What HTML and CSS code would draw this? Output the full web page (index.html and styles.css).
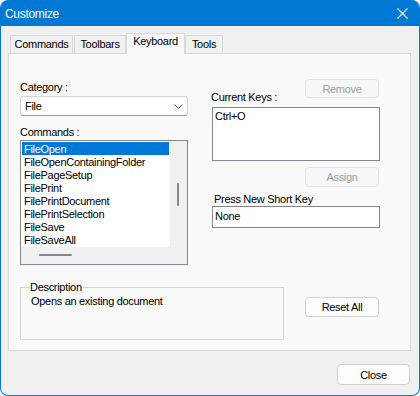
FILE: index.html
```html
<!DOCTYPE html>
<html lang="en">
<head>
    <meta charset="UTF-8">
    <title>Customize</title>
    <link rel="stylesheet" href="styles.css">
</head>
<body>
    <div class="window" role="dialog" aria-label="Customize">
        <div class="title-bar">
            <span class="title-bar-text">Customize</span>
            <svg class="title-close" width="11" height="11" viewBox="0 0 11 11" aria-hidden="true">
                <path d="M0.5 0.5 L10.5 10.5 M10.5 0.5 L0.5 10.5" stroke="#fff" stroke-width="1.1" fill="none"/>
            </svg>
        </div>

        <div class="window-body">
            <div class="tabs" role="tablist">
                <div class="tab tab-commands" role="tab">Commands</div>
                <div class="tab tab-toolbars" role="tab">Toolbars</div>
                <div class="tab tab-keyboard is-active" role="tab" aria-selected="true">Keyboard</div>
                <div class="tab tab-tools" role="tab">Tools</div>
            </div>

            <div class="tab-panel" role="tabpanel">
                <div class="columns">
                    <!-- left: category + command list -->
                    <div class="col-left">
                        <div class="label">Category :</div>
                        <div class="combo">
                            <span>File</span>
                            <svg width="9" height="5" viewBox="0 0 9 5" aria-hidden="true">
                                <path d="M0.5 0.5 L4.5 4.5 L8.5 0.5" stroke="#606060" stroke-width="1" fill="none"/>
                            </svg>
                        </div>
                        <div class="label label-commands">Commands :</div>
                        <div class="list-box">
                            <ul class="list-items">
                                <li class="is-selected">FileOpen</li>
                                <li>FileOpenContainingFolder</li>
                                <li>FilePageSetup</li>
                                <li>FilePrint</li>
                                <li>FilePrintDocument</li>
                                <li>FilePrintSelection</li>
                                <li>FileSave</li>
                                <li>FileSaveAll</li>
                            </ul>
                            <div class="vscroll"><span class="thumb"></span></div>
                            <div class="hscroll"><span class="thumb"></span></div>
                            <div class="corner"></div>
                        </div>
                    </div>

                    <!-- right: keys -->
                    <div class="col-right">
                        <div class="keys-head">
                            <div class="label">Current Keys :</div>
                            <button class="button" disabled>Remove</button>
                        </div>
                        <div class="keys-box">Ctrl+O</div>
                        <button class="button button-assign" disabled>Assign</button>
                        <div class="label label-press">Press New Short Key</div>
                        <div class="key-input">None</div>
                    </div>
                </div>

                <div class="bottom-row">
                    <fieldset class="description">
                        <legend>Description</legend>
                        <p>Opens an existing document</p>
                    </fieldset>
                    <button class="button button-reset">Reset All</button>
                </div>
            </div>

            <div class="footer">
                <button class="button button-close">Close</button>
            </div>
        </div>
    </div>
</body>
</html>
```

FILE: styles.css
```css
/* Windows 11 dialog theme */
:root {
    --accent: #0078d4;
    --dialog-bg: #f0f0f0;
    --panel-bg: #f9f9f9;
    --panel-border: #d9d9d9;
    --field-border: #828790;
    --button-border: #d0d0d0;
    --disabled-text: #a0a0a0;
}

html, body {
    margin: 0;
    background: #ffffff;
}

body {
    font-family: 'Liberation Sans', Arial, sans-serif;
    font-size: 11px;
    letter-spacing: -0.3px;
    color: #000;
}

.window {
    width: 420px;
    height: 396px;
    box-sizing: border-box;
    border: 1px solid var(--accent);
    border-top: 0;
    border-radius: 8px;
    overflow: hidden;
    background: var(--dialog-bg);
}

.title-bar {
    height: 26px;
    background: var(--accent);
    color: white;
    display: flex;
    justify-content: space-between;
    align-items: center;
    padding: 0 11px 0 4px;
}

.title-bar-text {
    font-size: 12px;
    padding-top: 1px;
}

.title-close {
    margin-top: 1px;
}

.window-body {
    padding: 7px 8px 0 7px;
}

/* tabs */
.tabs {
    display: flex;
    align-items: flex-end;
    height: 20px;
    padding-left: 2px;
}

.tab {
    box-sizing: border-box;
    height: 18px;
    line-height: 15px;
    padding: 1px 0 0;
    text-align: center;
    background: var(--dialog-bg);
    border: 1px solid var(--panel-border);
    border-bottom: 0;
}

.tab-commands { width: 63px; }
.tab-toolbars { width: 52px; margin-left: 1px; }
.tab-keyboard { width: 59px; }
.tab-tools { width: 38px; }

.tab.is-active {
    position: relative;
    z-index: 1;
    height: 21px;
    padding-top: 0;
    margin-bottom: -1px;
    background: var(--panel-bg);
}

.tab-panel {
    height: 298px;
    box-sizing: border-box;
    border: 1px solid var(--panel-border);
    background: var(--panel-bg);
    padding: 25px 0 0 11px;
}

.columns {
    display: flex;
    gap: 23px;
}

.label {
    line-height: 15px;
}

.col-left {
    width: 168px;
    padding-top: 1px;
}

.combo {
    box-sizing: border-box;
    height: 20px;
    margin-top: 1px;
    display: flex;
    align-items: center;
    justify-content: space-between;
    padding: 0 4px 0 4px;
    background: #fff;
    border: 1px solid #d4d4d4;
    border-bottom-color: #9a9a9a;
    border-radius: 3px;
}

.label-commands {
    margin-top: 9px;
}

/* command list with its scrollbars */
.list-box {
    width: 168px;
    height: 125px;
    box-sizing: border-box;
    border: 1px solid var(--field-border);
    display: grid;
    grid-template-columns: 149px 17px;
    grid-template-rows: 106px 17px;
    background: var(--dialog-bg);
}

.list-items {
    list-style: none;
    margin: 0;
    padding: 1px;
    background: #fff;
    overflow: hidden;
}

.list-items li {
    height: 13px;
    box-sizing: border-box;
    line-height: 12px;
    padding: 1px 0 0 2px;
    white-space: nowrap;
}

.list-items li.is-selected {
    background: #0078d7;
    color: white;
}

.vscroll {
    padding: 42px 0 0 7px;
}

.vscroll .thumb {
    display: block;
    width: 2px;
    height: 23px;
    background: #858585;
    border-radius: 1px;
}

.hscroll {
    padding: 7px 0 0 18px;
}

.hscroll .thumb {
    display: block;
    width: 33px;
    height: 2px;
    background: #858585;
    border-radius: 1px;
}

/* right column */
.col-right {
    width: 169px;
}

.keys-head {
    display: flex;
    justify-content: space-between;
    align-items: flex-end;
}

.keys-head .button {
    margin-bottom: 7px;
}

.keys-box {
    box-sizing: border-box;
    height: 54px;
    margin: 2px 0 0 1px;
    padding: 2px 2px;
    line-height: 13px;
    background: #fff;
    border: 1px solid var(--field-border);
}

.button {
    display: block;
    box-sizing: border-box;
    width: 74px;
    height: 20px;
    padding: 0;
    font: inherit;
    letter-spacing: inherit;
    color: #000;
    background: #fdfdfd;
    border: 1px solid var(--button-border);
    border-radius: 4px;
    margin-left: auto;
    margin-right: 1px;
}

.button:disabled {
    color: var(--disabled-text);
    background: #f7f7f7;
    border-color: #e3e3e3;
}

.keys-head .button {
    height: 19px;
    margin-left: 0;
}

.button-assign {
    margin-top: 6px;
}

.label-press {
    margin-top: 5px;
    line-height: 14px;
    padding-left: 3px;
}

.key-input {
    box-sizing: border-box;
    height: 22px;
    margin-left: 1px;
    padding: 2px 2px 0;
    line-height: 15px;
    background: #fff;
    border: 1px solid var(--field-border);
}

/* description + reset */
.bottom-row {
    display: flex;
    align-items: flex-start;
    margin-top: 15px;
}

.description {
    box-sizing: border-box;
    width: 264px;
    height: 60px;
    margin: 0;
    padding: 0 10px;
    border: 1px solid #d4d4d4;
}

.description legend {
    padding: 0 1px;
    margin-left: -2px;
    line-height: 15px;
}

.description p {
    margin: 0;
    line-height: 13px;
}

.button-reset {
    margin: 17px 0 0 21px;
}

.footer {
    display: flex;
    justify-content: flex-end;
    padding-top: 13px;
}

.button-close {
    width: 73px;
    height: 21px;
    margin: 0 1px 0 0;
}
```
